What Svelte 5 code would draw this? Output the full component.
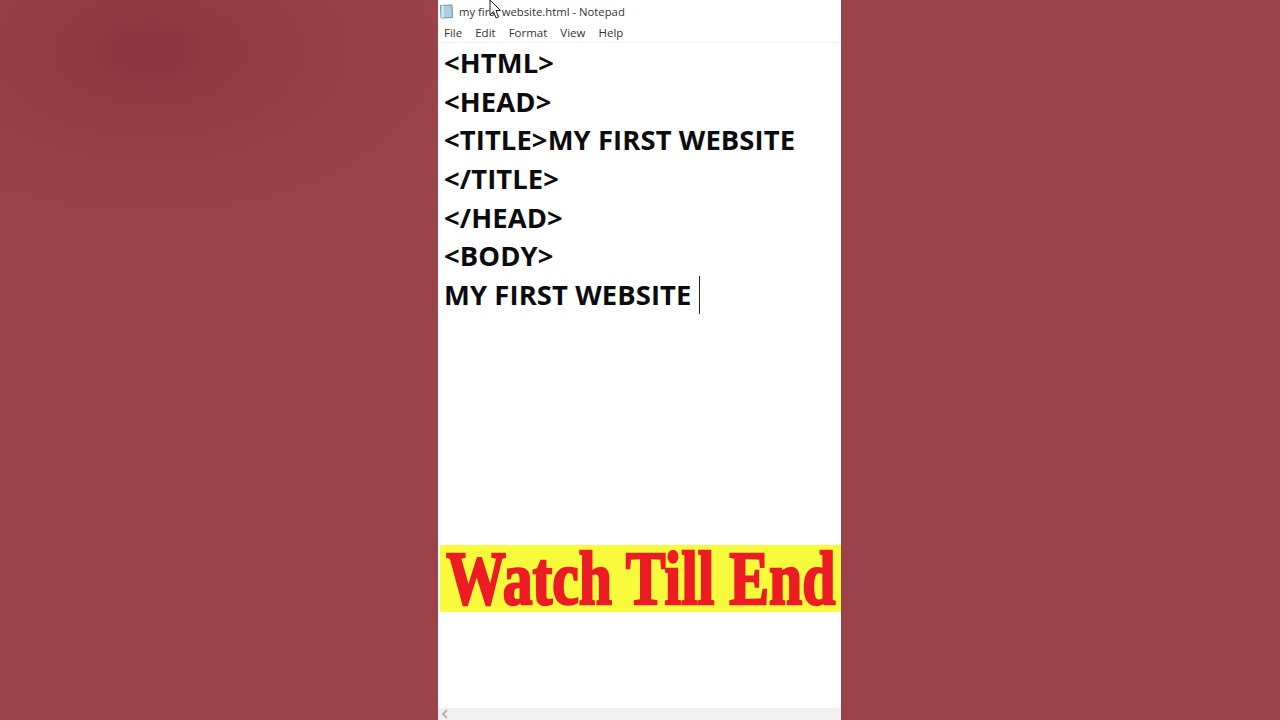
<script>
	const lines = [
		"<HTML>",
		"<HEAD>",
		"<TITLE>MY FIRST WEBSITE",
		"</TITLE>",
		"</HEAD>",
		"<BODY>"
	];
	const menu = ["File", "Edit", "Format", "View", "Help"];
</script>

<div class="page">
	<div class="side"></div>
	<div class="window">
		<div class="titlebar">
			<svg class="app-icon" width="15" height="15" viewBox="0 0 15 15">
				<path d="M1.5 1.5 L13 1 L13.5 13.5 L2 14 Z" fill="#a9cfe0" stroke="#6f8fa5" stroke-width="1" />
				<path d="M3.5 1.5 V14" stroke="#d7ebf3" stroke-width="2" />
			</svg>
			<span>my first website.html - Notepad</span>
			<svg class="cursor" width="12" height="20" viewBox="0 0 12 20">
				<path d="M1 0 V15 L4.5 11.5 L7 18 L9.5 17 L7 10.5 H11.5 Z" fill="#fff" stroke="#222" stroke-width="1" />
			</svg>
		</div>
		<div class="menubar">
			{#each menu as item}
				<span>{item}</span>
			{/each}
		</div>
		<div class="editor">
			{#each lines as line}
				<div class="line">{line}</div>
			{/each}
			<div class="line last"><span>MY FIRST WEBSITE</span><i class="caret"></i></div>
		</div>
		<div class="banner"><span>Watch Till End</span></div>
		<div class="scrollbar">
			<svg width="8" height="10" viewBox="0 0 8 10">
				<path d="M6 1 L2 5 L6 9" fill="none" stroke="#b4b4b4" stroke-width="2" />
			</svg>
		</div>
	</div>
	<div class="side right"></div>
</div>

<style>
	:global(body) {
		margin: 0;
		overflow: hidden;
	}
	.page {
		width: 1280px;
		height: 720px;
		display: flex;
		background: #9b424a;
	}
	.side {
		width: 438px;
		background: radial-gradient(ellipse 300px 170px at 150px 50px, #8e363f 0%, #9b424a 100%);
	}
	.side.right {
		width: 439px;
		background: #9b424a;
	}
	.window {
		width: 403px;
		height: 720px;
		background: #fff;
		display: flex;
		flex-direction: column;
		position: relative;
		font-family: "Open Sans", sans-serif;
	}
	.titlebar {
		height: 23px;
		display: flex;
		align-items: center;
		gap: 5px;
		padding-left: 1px;
		font-size: 11.3px;
		color: #333;
		position: relative;
	}
	.app-icon {
		flex: none;
	}
	.cursor {
		position: absolute;
		left: 51px;
		top: 0;
	}
	.menubar {
		height: 19px;
		display: flex;
		align-items: center;
		gap: 13px;
		padding-left: 6px;
		font-size: 11.5px;
		color: #333;
		border-bottom: 1px solid #efefef;
	}
	.editor {
		padding: 1px 0 0 6px;
		height: 502px;
		box-sizing: border-box;
		font-size: 27.4px;
		font-weight: 700;
		letter-spacing: 0.1px;
		line-height: 38.67px;
		color: #0c0c10;
	}
	.line {
		height: 38.67px;
		white-space: nowrap;
	}
	.last {
		display: flex;
		align-items: center;
		gap: 8px;
	}
	.caret {
		display: block;
		width: 1px;
		height: 38px;
		background: #222;
	}
	.banner {
		margin-left: 2px;
		width: 401px;
		height: 67px;
		background: #f7fb3c;
		display: flex;
		align-items: center;
		justify-content: center;
	}
	.banner span {
		font-family: "Liberation Serif", serif;
		font-weight: 700;
		font-size: 76px;
		color: #ec1c24;
		-webkit-text-stroke: 2.5px #ec1c24;
		white-space: nowrap;
		display: inline-block;
		transform: scaleX(0.785);
		line-height: 67px;
		flex: none;
	}
	.scrollbar {
		margin-top: auto;
		height: 12px;
		background: #f0f0f0;
		display: flex;
		align-items: center;
		padding-left: 3px;
	}
</style>
